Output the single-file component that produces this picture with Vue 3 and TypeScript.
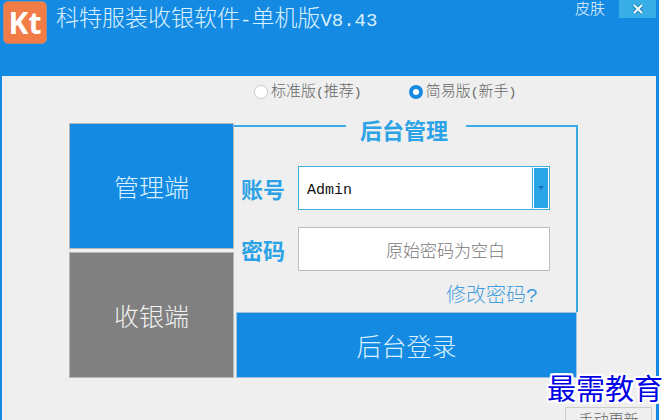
<script setup lang="ts">
import { ref } from 'vue'

const edition = ref<'standard' | 'simple'>('simple')
const account = ref('Admin')
const password = ref('')
</script>

<template>
  <div class="window">
    <header class="titlebar">
      <div class="logo">Kt</div>
      <h1 class="title">科特服装收银软件<span class="latin">-</span>单机版<span class="latin">V8.43</span></h1>
      <button type="button" class="skin">皮肤</button>
      <button type="button" class="close" aria-label="关闭">
        <svg viewBox="0 0 12 10" width="12" height="10">
          <path d="M2 1l8 8M10 1L2 9" stroke="#2585b8" stroke-width="4" />
          <path d="M2 1l8 8M10 1L2 9" stroke="#f4ffff" stroke-width="2" />
        </svg>
      </button>
    </header>

    <main class="content">
      <div class="editions">
        <label class="edition">
          <input v-model="edition" type="radio" name="edition" value="standard" />
          <span>标准版<span class="paren">(</span>推荐<span class="paren">)</span></span>
        </label>
        <label class="edition">
          <input v-model="edition" type="radio" name="edition" value="simple" />
          <span>简易版<span class="paren">(</span>新手<span class="paren">)</span></span>
        </label>
      </div>

      <div class="panel">
        <nav class="modes">
          <button type="button" class="mode active">管理端</button>
          <button type="button" class="mode">收银端</button>
        </nav>
        <form class="login" @submit.prevent>
          <h2 class="legend">后台管理</h2>
          <div class="fields">
            <div class="field">
              <label for="account">账号</label>
              <div class="combo">
                <select id="account" v-model="account">
                  <option>Admin</option>
                </select>
                <span class="arrow">
                  <svg viewBox="0 0 6 4" width="6" height="4"><path d="M0 0h6L3 4z" fill="#1673b5" /></svg>
                </span>
              </div>
            </div>
            <div class="field">
              <label for="password">密码</label>
              <input id="password" v-model="password" type="password" placeholder="原始密码为空白" />
            </div>
            <a class="change" href="#">修改密码<span class="mark">?</span></a>
          </div>
          <button type="submit" class="submit">后台登录</button>
        </form>
      </div>

      <div class="footer">
        <button type="button" class="update">手动更新</button>
      </div>
    </main>
    <div class="watermark">最需教育</div>
  </div>
</template>

<style>
html,
body {
  background: #fff;
  overflow: hidden;
}
</style>

<style scoped>
* {
  box-sizing: border-box;
}
.window {
  position: relative;
  display: flex;
  flex-direction: column;
  min-height: 100vh;
  margin-right: 10px;
  padding: 0 3px 0 2px;
  background: #158ae3;
  font-family: 'Noto Sans CJK SC', sans-serif;
  font-weight: 300;
}
button,
input,
select {
  margin: 0;
  font-family: inherit;
  font-weight: inherit;
}
button {
  padding: 0;
  border: 0;
}
.titlebar {
  display: flex;
  align-items: flex-start;
  height: 76px;
  color: #d9f1ff;
}
.logo {
  width: 44px;
  height: 43px;
  margin: 1px 9px 0 1px;
  border: 1px solid #a08d88;
  border-radius: 5px;
  background: #f17c48;
  color: #fff;
  font: 700 30px/42px 'Open Sans', sans-serif;
  text-align: center;
}
.title {
  flex: 1;
  margin: 0;
  font-size: 23px;
  font-weight: 300;
  line-height: 32px;
  white-space: nowrap;
}
.latin {
  font-family: 'Liberation Mono', monospace;
  font-size: 19px;
}
.skin {
  margin-right: 14px;
  background: none;
  color: #e6f6ff;
  font-size: 15px;
  line-height: 16px;
}
.close {
  display: flex;
  align-items: center;
  justify-content: center;
  width: 37px;
  height: 18px;
  background: #39ade6;
}
.content {
  flex: 1;
  background: #efefef;
}
.editions {
  display: flex;
  gap: 47px;
  padding: 4px 0 0 252px;
}
.edition {
  display: flex;
  align-items: center;
  gap: 3px;
  color: #666;
  font-size: 15px;
  line-height: 20px;
  white-space: nowrap;
}
.edition input {
  appearance: none;
  width: 14px;
  height: 14px;
  border: 1px solid #ccc;
  border-radius: 50%;
  background: #fff;
}
.edition input:checked {
  border: 4px solid #158ae3;
}
.paren {
  font-family: 'Liberation Mono', monospace;
  font-size: 13px;
}
.panel {
  display: grid;
  grid-template-columns: 165px minmax(0, 1fr);
  margin: 20px 78px 0 67px;
}
.modes {
  display: grid;
  grid-template-rows: 126px 126px;
  gap: 3px;
}
.mode {
  border: 1px solid #b4b8bb;
  background: #808080;
  color: #f0f0f0;
  font-size: 25px;
}
.mode.active {
  background: #158ae3;
  color: #d9f1ff;
}
.login {
  display: flex;
  flex-direction: column;
}
.legend {
  display: flex;
  margin: 0;
  color: #2ca3e6;
  font-size: 22px;
  font-weight: 700;
  line-height: 12px;
  white-space: nowrap;
}
.legend::before,
.legend::after {
  content: '';
  flex: 1;
  height: 2px;
  margin-top: 2px;
  background: #38aae6;
}
.legend::before {
  margin-right: 14px;
}
.legend::after {
  margin-left: 18px;
}
.fields {
  display: flex;
  flex: 1;
  flex-direction: column;
  gap: 17px;
  margin-top: -8px;
  padding: 39px 26px 0 7px;
  border-right: 2px solid #38aae6;
}
.field {
  display: flex;
  align-items: center;
  gap: 13px;
}
.field label {
  width: 44px;
  color: #2ca3e6;
  font-size: 22px;
  font-weight: 700;
  line-height: 24px;
  white-space: nowrap;
}
.combo {
  display: flex;
  flex: 1;
  height: 44px;
  border: 1px solid #43addf;
  background: #fff;
}
.combo select {
  flex: 1;
  appearance: none;
  padding: 4px 8px 0;
  border: 0;
  background: #fff;
  color: #111;
  font-family: 'Liberation Mono', monospace;
  font-size: 15px;
  font-weight: 400;
}
.arrow {
  display: flex;
  align-items: center;
  justify-content: center;
  width: 17px;
  border: 1px solid #fff;
  border-left-color: #43addf;
  background: #2aa6e8;
  box-shadow: inset 1px 0 #fff;
}
.field input {
  flex: 1;
  min-width: 0;
  height: 44px;
  padding: 0 44px;
  border: 1px solid #bbb;
  background: #fff;
  font-size: 17px;
  text-align: right;
}
.field input::placeholder {
  color: #777;
}
.change {
  align-self: flex-end;
  margin: -8px 12px 0 0;
  color: #459fdf;
  font-size: 20px;
  line-height: 28px;
  text-decoration: none;
}
.mark {
  font-family: 'Liberation Mono', monospace;
}
.submit {
  height: 66px;
  margin: 0 1px 0 2px;
  border: 1px solid #9fc3df;
  background: #158ae3;
  color: #d9f1ff;
  font-size: 25px;
}
.footer {
  display: flex;
  justify-content: flex-end;
  height: 42px;
  padding: 29px 4px 0 0;
  overflow: hidden;
}
.update {
  width: 87px;
  height: 24px;
  border: 1px solid #ccc;
  background: #efefef;
  color: #666;
  font-size: 15px;
  line-height: 20px;
}
.watermark {
  position: absolute;
  right: -4px;
  bottom: 17px;
  color: #0000e6;
  font-size: 29px;
  font-weight: 400;
  line-height: 32px;
  white-space: nowrap;
  text-shadow: 2px 0 #fff, -2px 0 #fff, 0 2px #fff, 0 -2px #fff, 2px 2px #fff, -2px -2px #fff, 2px -2px #fff, -2px 2px #fff;
}
</style>
